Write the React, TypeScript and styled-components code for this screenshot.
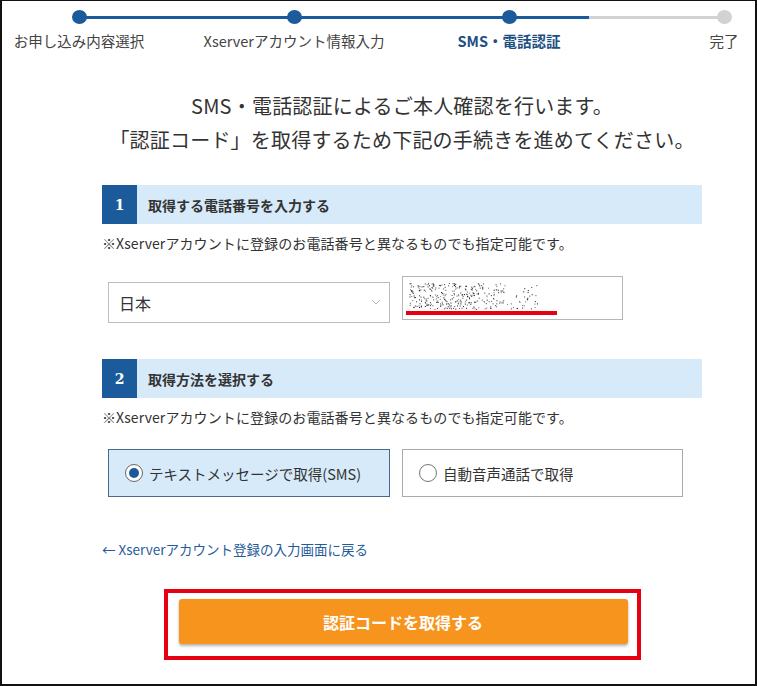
import React from "react";
import styled, { createGlobalStyle } from "styled-components";

const Global = createGlobalStyle`
  html, body { margin: 0; padding: 0; background: #fff; }
  body { font-family: "Noto Sans CJK JP", "Noto Sans", sans-serif; color: #333; }
  * { box-sizing: border-box; }
`;

const BLUE = "#1b5b9b";
const FONT = `"Noto Sans CJK JP", "Noto Sans", sans-serif`;

const Frame = styled.div`
  width: 757px;
  height: 686px;
  border-left: 2px solid #111;
  border-top: 1px solid #111;
  border-right: 2px solid #111;
  border-bottom: 2px solid #111;
  overflow: hidden;
  background: #fff;
`;

const Stepper = styled.div`
  display: grid;
  grid-template-columns: repeat(4, 215px);
  margin-left: -30.5px;
  padding-top: 9px;
`;

const Step = styled.div<{ $line?: string }>`
  position: relative;
  display: flex;
  flex-direction: column;
  align-items: center;
  &::after {
    content: "";
    display: ${(p) => (p.$line ? "block" : "none")};
    position: absolute;
    left: 107.5px;
    top: 5.5px;
    width: 215px;
    height: 3px;
    background: ${(p) => p.$line};
  }
`;

const Dot = styled.div<{ $done: boolean }>`
  position: relative;
  z-index: 1;
  width: 15px;
  height: 14px;
  border-radius: 50%;
  background: ${(p) => (p.$done ? BLUE : "#d2d2d2")};
`;

const StepLabel = styled.div<{ $current?: boolean }>`
  margin-top: 7px;
  font-size: 14.5px;
  line-height: 20px;
  white-space: nowrap;
  font-weight: ${(p) => (p.$current ? 700 : 400)};
  color: ${(p) => (p.$current ? "#1d4f84" : "#444")};
`;

const Content = styled.div`
  width: 600px;
  margin-left: 100px;
`;

const Headline = styled.h1`
  margin: 38px 0 0;
  font-size: 20px;
  line-height: 34px;
  font-weight: 400;
  text-align: center;
  color: #333;
  letter-spacing: 0.2px;
`;

const SectionHeader = styled.div<{ $mt: number }>`
  display: flex;
  align-items: stretch;
  height: 39px;
  margin-top: ${(p) => p.$mt}px;
  background: #d7eafa;
`;

const NumBox = styled.div`
  width: 35px;
  display: flex;
  align-items: center;
  justify-content: center;
  background: ${BLUE};
  color: #fff;
  font-family: "DejaVu Serif", serif;
  font-weight: 700;
  font-size: 14px;
`;

const SectionTitle = styled.div`
  display: flex;
  align-items: center;
  padding-left: 11px;
  font-size: 14px;
  font-weight: 700;
  color: #333;
`;

const Note = styled.p`
  margin: 9px 0 0;
  font-size: 14px;
  line-height: 20px;
  color: #333;
  white-space: nowrap;
  letter-spacing: 0.1px;
`;

const PhoneRow = styled.div`
  display: flex;
  align-items: flex-start;
  margin-top: 23px;
  padding-left: 6px;
`;

const Select = styled.div`
  position: relative;
  margin-top: 6px;
  width: 282px;
  height: 41px;
  border: 1px solid #bdbdbd;
  display: flex;
  align-items: center;
  padding-left: 10px;
  font-size: 16px;
  color: #333;
  background: #fff;
`;

const Chevron = styled.svg`
  position: absolute;
  right: 8px;
  top: 16px;
`;

const PhoneInput = styled.div`
  position: relative;
  margin-left: 12px;
  width: 221px;
  height: 44px;
  border: 1px solid #b5b5b5;
  background: #fff;
`;

const Redline = styled.div`
  position: absolute;
  left: 3px;
  top: 34px;
  width: 151px;
  height: 4px;
  background: #e60012;
`;

const Mosaic = styled.svg`
  position: absolute;
  left: 6px;
  top: 6px;
`;

const RadioRow = styled.div`
  display: flex;
  margin-top: 22px;
  padding-left: 6px;
  gap: 12px;
`;

const RadioBox = styled.label<{ $checked: boolean; $w: number }>`
  flex: none;
  display: flex;
  align-items: center;
  width: ${(p) => p.$w}px;
  height: 48px;
  padding-left: 16px;
  gap: 6px;
  border: 1px solid ${(p) => (p.$checked ? "#4a6a8a" : "#aaa")};
  background: ${(p) => (p.$checked ? "#d7eafa" : "#fff")};
  font-size: 14.5px;
  color: #333;
  white-space: nowrap;
`;

const RadioCircle = styled.span<{ $checked: boolean }>`
  flex: none;
  width: 18px;
  height: 18px;
  border-radius: 50%;
  border: 1px solid ${(p) => (p.$checked ? "#666" : "#777")};
  background: #fff;
  display: flex;
  align-items: center;
  justify-content: center;
  &::after {
    content: "";
    display: ${(p) => (p.$checked ? "block" : "none")};
    width: 10px;
    height: 10px;
    border-radius: 50%;
    background: ${BLUE};
  }
`;

const BackLink = styled.a`
  display: block;
  margin-top: 42px;
  font-size: 13.5px;
  line-height: 20px;
  color: #1f5c99;
  text-decoration: none;
  white-space: nowrap;
`;

const Highlight = styled.div`
  width: 477px;
  height: 71px;
  margin: 30px auto 0;
  border: 4px solid #e60012;
  padding: 6px 9px 12px 11px;
`;

const SubmitButton = styled.button`
  width: 449px;
  height: 45px;
  border: none;
  border-radius: 3px;
  background: #f7941d;
  box-shadow: 0 2px 3px rgba(0, 0, 0, 0.3);
  color: #fff;
  font-family: ${FONT};
  font-size: 16px;
  font-weight: 700;
  cursor: pointer;
`;

function MosaicDots() {
  const rects: React.ReactNode[] = [];
  let s = 12345;
  const rnd = () => {
    s = (s * 1103515245 + 12345) & 0x7fffffff;
    return s / 0x7fffffff;
  };
  for (let i = 0; i < 700; i++) {
    const x = rnd() * 130;
    const y = rnd() * 26;
    const fade = x > 95 ? 0.15 : x > 70 ? 0.4 : 0.7;
    if (rnd() > fade) continue;
    const g = Math.floor(rnd() * 120);
    rects.push(
      <rect key={i} x={x.toFixed(1)} y={y.toFixed(1)} width="1" height="1" fill={`rgb(${g},${g},${g})`} />
    );
  }
  return (
    <Mosaic width="140" height="28" viewBox="0 0 140 28">
      {rects}
    </Mosaic>
  );
}

const steps = [
  { label: "お申し込み内容選択", done: true, line: BLUE },
  { label: "Xserverアカウント情報入力", done: true, line: BLUE },
  { label: "SMS・電話認証", done: true, current: true, line: `linear-gradient(to right, ${BLUE} 0 80px, #d2d2d2 80px)` },
  { label: "完了", done: false },
];

export default function App() {
  return (
    <>
      <Global />
      <Frame>
        <Stepper>
          {steps.map((s) => (
            <Step key={s.label} $line={s.line}>
              <Dot $done={s.done} />
              <StepLabel $current={s.current}>{s.label}</StepLabel>
            </Step>
          ))}
        </Stepper>
        <Content>
          <Headline>
            SMS・電話認証によるご本人確認を行います。
            <br />
            「認証コード」を取得するため下記の手続きを進めてください。
          </Headline>

          <SectionHeader $mt={28}>
            <NumBox>1</NumBox>
            <SectionTitle>取得する電話番号を入力する</SectionTitle>
          </SectionHeader>
          <Note>※Xserverアカウントに登録のお電話番号と異なるものでも指定可能です。</Note>
          <PhoneRow>
            <Select>
              日本
              <Chevron width="10" height="7" viewBox="0 0 10 7">
                <polyline points="1,1 5,5 9,1" fill="none" stroke="#bbb" strokeWidth="1" />
              </Chevron>
            </Select>
            <PhoneInput>
              <MosaicDots />
              <Redline />
            </PhoneInput>
          </PhoneRow>

          <SectionHeader $mt={36}>
            <NumBox>2</NumBox>
            <SectionTitle>取得方法を選択する</SectionTitle>
          </SectionHeader>
          <Note>※Xserverアカウントに登録のお電話番号と異なるものでも指定可能です。</Note>
          <RadioRow>
            <RadioBox $checked={true} $w={282}>
              <RadioCircle $checked={true} />
              テキストメッセージで取得(SMS)
            </RadioBox>
            <RadioBox $checked={false} $w={281}>
              <RadioCircle $checked={false} />
              自動音声通話で取得
            </RadioBox>
          </RadioRow>

          <BackLink href="#">← Xserverアカウント登録の入力画面に戻る</BackLink>

          <Highlight>
            <SubmitButton>認証コードを取得する</SubmitButton>
          </Highlight>
        </Content>
      </Frame>
    </>
  );
}
